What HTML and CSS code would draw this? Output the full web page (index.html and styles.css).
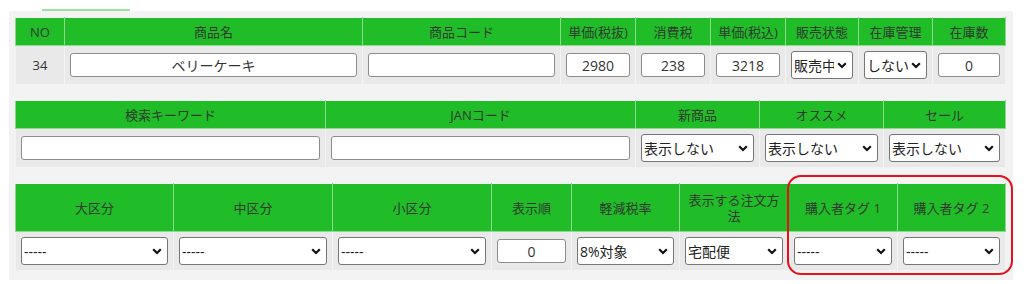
FILE: index.html
```html
<!DOCTYPE html>
<html lang="ja">
<head>
  <meta charset="UTF-8" />
  <meta name="viewport" content="width=device-width, initial-scale=1.0"/>
  <title>商品編集</title>
  <link rel="stylesheet" href="styles.css">
</head>
<body>
  <div class="tabs">
    <span class="tab-line"></span>
  </div>

  <div class="panel">
    <table class="grid">
      <colgroup>
        <col style="width:49px"><col style="width:298px"><col style="width:198px">
        <col style="width:75px"><col style="width:75px"><col style="width:75px">
        <col style="width:73px"><col style="width:74px"><col style="width:73px">
      </colgroup>
      <tr class="head">
        <th>NO</th>
        <th>商品名</th>
        <th>商品コード</th>
        <th>単価(税抜)</th>
        <th>消費税</th>
        <th>単価(税込)</th>
        <th>販売状態</th>
        <th>在庫管理</th>
        <th>在庫数</th>
      </tr>
      <tr class="row">
        <td>34</td>
        <td><input type="text" value="ベリーケーキ"></td>
        <td><input type="text" value=""></td>
        <td><input type="text" value="2980"></td>
        <td><input type="text" value="238"></td>
        <td><input type="text" value="3218"></td>
        <td><select><option>販売中</option><option>停止中</option></select></td>
        <td><select><option>しない</option><option>する</option></select></td>
        <td><input type="text" value="0"></td>
      </tr>
    </table>

    <table class="grid">
      <colgroup>
        <col style="width:310px"><col style="width:310px">
        <col style="width:124px"><col style="width:124px"><col style="width:122px">
      </colgroup>
      <tr class="head">
        <th>検索キーワード</th>
        <th>JANコード</th>
        <th>新商品</th>
        <th>オススメ</th>
        <th>セール</th>
      </tr>
      <tr class="row">
        <td><input type="text" value=""></td>
        <td><input type="text" value=""></td>
        <td><select><option>表示しない</option><option>表示する</option></select></td>
        <td><select><option>表示しない</option><option>表示する</option></select></td>
        <td><select><option>表示しない</option><option>表示する</option></select></td>
      </tr>
    </table>

    <table class="grid tall">
      <colgroup>
        <col style="width:158px"><col style="width:159px"><col style="width:159px">
        <col style="width:80px"><col style="width:108px"><col style="width:109px">
        <col style="width:109px"><col style="width:108px">
      </colgroup>
      <tr class="head">
        <th>大区分</th>
        <th>中区分</th>
        <th>小区分</th>
        <th>表示順</th>
        <th>軽減税率</th>
        <th>表示する注文方法</th>
        <th>購入者タグ 1</th>
        <th>購入者タグ 2</th>
      </tr>
      <tr class="row">
        <td><select><option>-----</option></select></td>
        <td><select><option>-----</option></select></td>
        <td><select><option>-----</option></select></td>
        <td><input type="text" value="0"></td>
        <td><select><option>8%対象</option><option>10%対象</option></select></td>
        <td><select><option>宅配便</option><option>店頭受取</option></select></td>
        <td><select><option>-----</option></select></td>
        <td><select><option>-----</option></select></td>
      </tr>
    </table>

    <div class="highlight"></div>
  </div>
</body>
</html>
```

FILE: styles.css
```css
body {
  margin: 0;
  font-family: "Open Sans", "Noto Sans CJK JP", sans-serif;
  font-size: 13px;
  color: #333;
  background: #fff;
}

.tabs {
  height: 11px;
  position: relative;
}

.tab-line {
  display: block;
  margin-left: 42px;
  width: 88px;
  height: 11px;
  border-bottom: 2px solid #9fdf9f;
  box-sizing: border-box;
}

.panel {
  position: relative;
  margin-left: 9px;
  width: 1004px;
  height: 269px;
  box-sizing: border-box;
  padding: 6px 0 0 6px;
  background: #f3f3f3;
  display: flex;
  flex-direction: column;
  gap: 15px;
}

.grid {
  width: 990px;
  table-layout: fixed;
  border-collapse: collapse;
}

.grid th,
.grid td {
  border: 1px solid #f3f3f3;
  text-align: center;
  padding: 0 5px;
  font-weight: normal;
  overflow: hidden;
  white-space: nowrap;
}

.grid th {
  background: #21bd29;
  border-color: #8fd98f;
  height: 27px;
  color: #2e3a2e;
  line-height: 16px;
}

.grid.tall th {
  height: 47px;
  white-space: normal;
}

.grid td {
  background: #e9e9e9;
  height: 38px;
}

.grid tr.head th {
  border-top-color: #f3f3f3;
}

input[type="text"] {
  width: 100%;
  height: 24px;
  box-sizing: border-box;
  border: 1px solid #8c8c8c;
  border-radius: 3px;
  background: #fff;
  text-align: center;
  font-family: "Open Sans", "Noto Sans CJK JP", sans-serif;
  font-size: 14px;
  color: #333;
  padding: 0 4px;
}

select {
  appearance: none;
  -webkit-appearance: none;
  width: 100%;
  height: 28px;
  box-sizing: border-box;
  border: 1px solid #767676;
  border-radius: 3px;
  background: #fff url("data:image/svg+xml;utf8,<svg xmlns='http://www.w3.org/2000/svg' width='10' height='7' viewBox='0 0 10 7'><path d='M1.2 1.3 L5 5 L8.8 1.3' fill='none' stroke='%23111' stroke-width='2.2'/></svg>") no-repeat right 5px center;
  font-family: "Open Sans", "Noto Sans CJK JP", sans-serif;
  font-size: 14px;
  color: #222;
  padding: 0 18px 0 2px;
}

.highlight {
  position: absolute;
  left: 778px;
  top: 164px;
  width: 226px;
  height: 100px;
  box-sizing: border-box;
  border: 2px solid #e8101a;
  border-radius: 14px;
  pointer-events: none;
}
```
